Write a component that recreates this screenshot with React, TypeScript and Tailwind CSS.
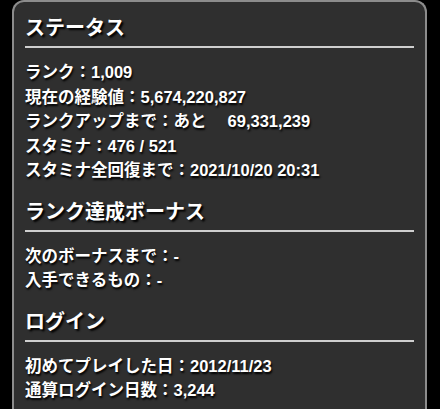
import React from 'react';

type Section = { title: string; rows: string[] };

const sections: Section[] = [
  {
    title: 'ステータス',
    rows: [
      'ランク：1,009',
      '現在の経験値：5,674,220,827',
      'ランクアップまで：あと\u3000 69,331,239',
      'スタミナ：476 / 521',
      'スタミナ全回復まで：2021/10/20 20:31',
    ],
  },
  {
    title: 'ランク達成ボーナス',
    rows: ['次のボーナスまで：-', '入手できるもの：-'],
  },
  {
    title: 'ログイン',
    rows: ['初めてプレイした日：2012/11/23', '通算ログイン日数：3,244'],
  },
];

export default function App() {
  return (
    <div
      className="h-[409px] w-[440px] overflow-hidden bg-black pl-[12px] pr-[13px] font-bold text-white"
      style={{ fontFamily: '"Liberation Sans", "Noto Sans CJK JP", sans-serif' }}
    >
      <div className="h-[420px] rounded-t-[12px] border-2 border-b-0 border-[#8c8c8c] bg-[#2f2f2f] px-[11px] pt-[12px]">
        {sections.map((s, i) => (
          <section key={s.title} className={i === 0 ? '' : 'mt-[15px]'}>
            <h2 className="border-b-2 border-[#cfcfcf] pb-[4px] text-[20px] leading-[28px] [text-shadow:2px_2px_2px_#000]">
              {s.title}
            </h2>
            <div className="mt-[12px]">
              {s.rows.map((r) => (
                <p key={r} className="whitespace-pre text-[16.5px] leading-[24.5px] [text-shadow:1px_2px_2px_#000]">
                  {r}
                </p>
              ))}
            </div>
          </section>
        ))}
      </div>
    </div>
  );
}
